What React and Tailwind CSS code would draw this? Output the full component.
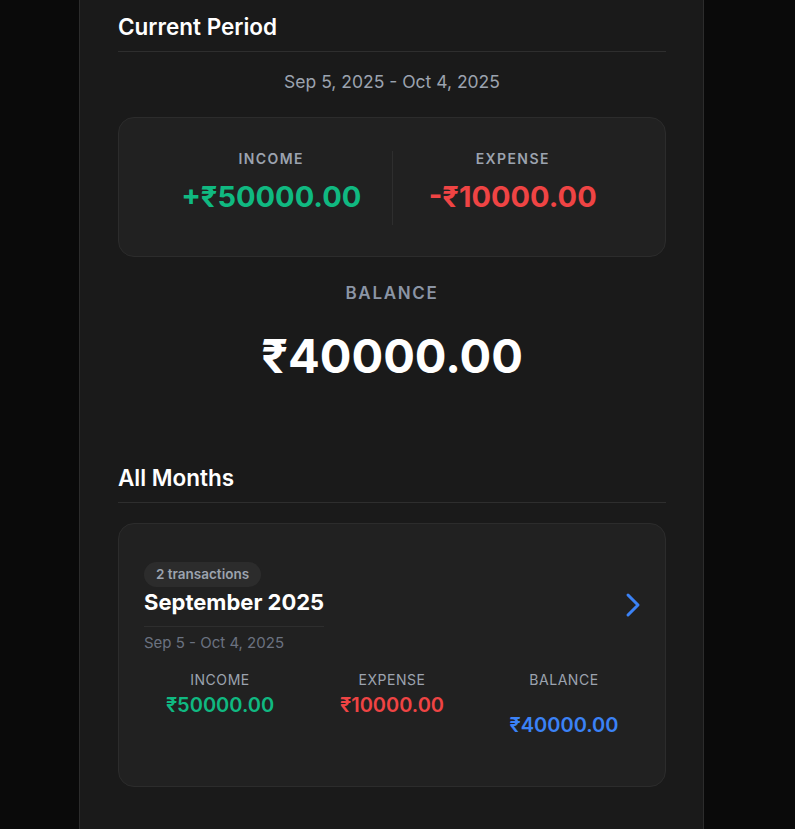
import React from "react";

const months = [
  {
    name: "September 2025",
    range: "Sep 5 - Oct 4, 2025",
    count: 2,
    income: "50000.00",
    expense: "10000.00",
    balance: "40000.00",
  },
];

const Chevron = () => (
  <svg
    width="16"
    height="26"
    viewBox="0 0 16 26"
    fill="none"
    stroke="#3b82f6"
    strokeWidth="3"
    strokeLinecap="round"
    strokeLinejoin="round"
  >
    <path d="M3 3 L13 13 L3 23" />
  </svg>
);

export default function App() {
  return (
    <div
      className="min-h-[829px] w-full bg-[#0a0a0a] flex"
      style={{ fontFamily: "Inter, 'Noto Sans', sans-serif" }}
    >
      <div className="ml-[79px] w-[625px] min-h-[829px] bg-[#1a1a1a] border-x border-[#2c2c2c] pl-[38px] pr-[37px] pt-[10px] pb-10">
        {/* ------------Current Period----------> */}
        <div className="border-b border-[#2e2e2e] pb-[8px]">
          <h2 className="text-[22.5px] leading-[33px] font-semibold text-white">
            Current Period
          </h2>
        </div>
        <p className="mt-[18px] text-center text-[17.5px] leading-[24px] text-[#9ca3af]">
          Sep 5, 2025 - Oct 4, 2025
        </p>

        <div className="mt-[23px] rounded-2xl border border-[#2c2c2c] bg-[#212121] pt-[33px] pb-[31px] px-8 flex">
          <div className="flex-1 flex flex-col items-center h-[74px]">
            <span className="text-[14px] leading-[20px] -mt-[2px] font-semibold tracking-[0.1em] text-[#9ca3af]">
              INCOME
            </span>
            <span className="mt-[10px] text-[29px] leading-[36px] font-bold text-[#10b981]">
              +₹50000.00
            </span>
          </div>
          <div className="flex-1 flex flex-col items-center h-[74px] border-l border-[#2e2e2e]">
            <span className="text-[14px] leading-[20px] -mt-[2px] font-semibold tracking-[0.1em] text-[#9ca3af]">
              EXPENSE
            </span>
            <span className="mt-[10px] text-[29px] leading-[36px] font-bold text-[#ef4444]">
              -₹10000.00
            </span>
          </div>
        </div>

        <div className="mt-[24px] flex flex-col items-center">
          <span className="text-[17px] leading-[24px] font-semibold tracking-[0.1em] text-[#8b95a5]">
            BALANCE
          </span>
          <span className="mt-[27px] text-[47px] leading-[48px] font-bold text-white">
            ₹40000.00
          </span>
        </div>

        {/* ------------All Months----------> */}
        <div className="mt-[81px] border-b border-[#2e2e2e] pb-[8px]">
          <h2 className="text-[22.5px] leading-[33px] font-semibold text-white">
            All Months
          </h2>
        </div>

        {months.map((m) => (
          <div
            key={m.name}
            className="mt-[20px] rounded-2xl border border-[#2c2c2c] bg-[#212121] px-[25px] pt-[38px] pb-[48px]"
          >
            <div className="flex items-center justify-between">
              <div className="flex flex-col items-start">
                <span className="rounded-full bg-[#2c2c2c] px-3 h-[25px] flex items-center text-[13.5px] font-semibold text-[#9ca3af]">
                  {m.count} transactions
                </span>
                <div className="border-b border-[#2e2e2e] pb-[10px] mt-px">
                  <h3 className="text-[22px] leading-[28px] font-bold text-white">
                    {m.name}
                  </h3>
                </div>
                <span className="mt-[6px] text-[15px] leading-[20px] text-[#6b7280]">
                  {m.range}
                </span>
              </div>
              <div className="-mt-[6px] -mr-[1px]">
                <Chevron />
              </div>
            </div>

            <div className="mt-[17px] grid grid-cols-3 gap-5">
              <div className="flex flex-col items-center">
                <span className="text-[14px] leading-[20px] tracking-[0.04em] text-[#9ca3af]">
                  INCOME
                </span>
                <span className="mt-[2px] text-[20px] leading-[26px] font-semibold text-[#10b981]">
                  ₹{m.income}
                </span>
              </div>
              <div className="flex flex-col items-center">
                <span className="text-[14px] leading-[20px] tracking-[0.04em] text-[#9ca3af]">
                  EXPENSE
                </span>
                <span className="mt-[2px] text-[20px] leading-[26px] font-semibold text-[#ef4444]">
                  ₹{m.expense}
                </span>
              </div>
              <div className="flex flex-col items-center">
                <span className="text-[14px] leading-[20px] tracking-[0.04em] text-[#9ca3af]">
                  BALANCE
                </span>
                <span className="mt-[22px] text-[20px] leading-[26px] font-semibold text-[#3b82f6]">
                  ₹{m.balance}
                </span>
              </div>
            </div>
          </div>
        ))}
      </div>
    </div>
  );
}
